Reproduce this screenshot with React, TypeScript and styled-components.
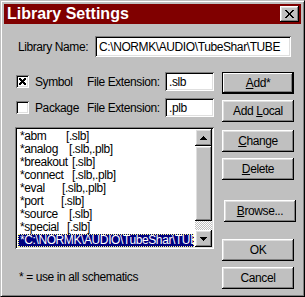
import React from 'react';
import styled, { createGlobalStyle, css } from 'styled-components';

const GlobalStyle = createGlobalStyle`
  html, body {
    margin: 0;
    padding: 0;
    background: #c0c0c0;
  }
  * {
    box-sizing: border-box;
  }
`;

const uiFont = css`
  font-family: 'Liberation Sans', Arial, sans-serif;
  font-size: 12px;
  letter-spacing: -0.4px;
  color: #000;
`;

const raised = css`
  background: #c0c0c0;
  box-shadow: inset -1px -1px #000, inset 1px 1px #fff, inset -2px -2px #808080, inset 2px 2px #dfdfdf;
`;

const sunken = css`
  box-shadow: inset 1px 1px #808080, inset -1px -1px #fff, inset 2px 2px #000, inset -2px -2px #dfdfdf;
`;

const Window = styled.div`
  width: 305px;
  height: 297px;
  background: #c0c0c0;
  border: 1px solid;
  border-color: #c0c0c0 #000 #000 #c0c0c0;
  box-shadow: inset 1px 1px #fff, inset -1px -1px #808080;
  padding: 3px;
  display: flex;
  flex-direction: column;
  ${uiFont};
`;

const TitleBar = styled.div`
  height: 20px;
  background: #800000;
  display: flex;
  align-items: center;
  justify-content: space-between;
  padding: 0 2px 0 3px;
`;

const Title = styled.span`
  font-family: 'Liberation Sans', Arial, sans-serif;
  font-weight: bold;
  font-size: 16px;
  letter-spacing: 0;
  color: #fff;
`;

const CloseButton = styled.div`
  width: 19px;
  height: 16px;
  ${raised};
  display: flex;
  align-items: center;
  justify-content: center;
`;

const Body = styled.div`
  display: flex;
  flex-direction: column;
  padding: 12px 10px 0 11px;
`;

const NameRow = styled.div`
  display: flex;
  align-items: center;
  height: 21px;
`;

const Label = styled.span`
  ${uiFont};
  white-space: nowrap;
  flex: none;
`;

const TextField = styled.div<{ $width: number; $height: number }>`
  width: ${(p) => p.$width}px;
  height: ${(p) => p.$height}px;
  background: #fff;
  ${sunken};
  display: flex;
  align-items: center;
  padding-left: 4px;
  margin-left: auto;
  white-space: nowrap;
  overflow: hidden;
  ${uiFont};
`;

const Main = styled.div`
  display: flex;
  gap: 8px;
  margin-top: 15px;
`;

const LeftCol = styled.div`
  width: 199px;
  display: flex;
  flex-direction: column;
`;

const OptionRow = styled.div<{ $top?: number }>`
  display: grid;
  grid-template-columns: 72px 1fr 49px;
  align-items: center;
  height: 19px;
  margin-top: ${(p) => p.$top ?? 0}px;
`;

const CheckLabel = styled.label`
  display: flex;
  align-items: center;
  gap: 6px;
  padding-left: 1px;
  ${uiFont};
`;

const CheckBox = styled.span`
  width: 13px;
  height: 13px;
  background: #fff;
  ${sunken};
  display: flex;
  align-items: center;
  justify-content: center;
`;

const ListBox = styled.div`
  margin-top: 10px;
  height: 122px;
  background: #fff;
  ${sunken};
  padding: 2px;
  display: flex;
`;

const Items = styled.div`
  flex: 1;
  padding-top: 1px;
  overflow: hidden;
`;

const Item = styled.div<{ $selected?: boolean }>`
  height: 13px;
  line-height: 13px;
  margin: 0 1px;
  padding-left: 2px;
  white-space: nowrap;
  overflow: hidden;
  display: flex;
  ${uiFont};
  ${(p) =>
    p.$selected &&
    css`
      background: #000080;
      color: #fff;
      outline: 1px dotted #ffff80;
      outline-offset: -1px;
    `}
`;

const ItemName = styled.span<{ $col: number }>`
  width: ${(p) => p.$col}px;
  flex: none;
`;

const ScrollBar = styled.div`
  width: 17px;
  display: flex;
  flex-direction: column;
`;

const ScrollButton = styled.div`
  width: 17px;
  height: 17px;
  ${raised};
  display: flex;
  align-items: center;
  justify-content: center;
`;

const Thumb = styled.div`
  height: 75px;
  ${raised};
`;

const Track = styled.div`
  flex: 1;
  background: repeating-conic-gradient(#c0c0c0 0 25%, #fff 0 50%) 0 0 / 2px 2px;
`;

const Footnote = styled.div`
  margin-top: 22px;
  padding-left: 4px;
  line-height: 13px;
  ${uiFont};
`;

const RightCol = styled.div`
  display: flex;
  flex-direction: column;
`;

const Button = styled.div<{ $gap?: number; $shift?: number; $default?: boolean }>`
  width: 72px;
  height: 22px;
  margin-top: ${(p) => p.$gap ?? 0}px;
  margin-left: ${(p) => p.$shift ?? 0}px;
  ${raised};
  display: flex;
  align-items: center;
  justify-content: center;
  ${uiFont};
  ${(p) =>
    p.$default &&
    css`
      border: 1px solid #000;
      box-shadow: inset -1px -1px #000, inset 1px 1px #fff, inset -2px -2px #808080;
    `}
`;

const CloseGlyph = () => (
  <svg width="9" height="8" viewBox="0 0 9 8" shapeRendering="crispEdges">
    <path d="M0 0h2v1h1v1h1v1h1V2h1V1h1V0h2v1H8v1H7v1H6v2h1v1h1v1h1v1H7V7H6V6H5V5H4v1H3v1H2v1H0V7h1V6h1V5h1V3H2V2H1V1H0z" fill="#000" />
  </svg>
);

const CheckGlyph = () => (
  <svg width="7" height="7" viewBox="0 0 7 7" shapeRendering="crispEdges">
    <path d="M0 0h2v1h1v1h1V1h1V0h2v2H6v1H5v1h1v1h1v2H5V6H4V5H3v1H2v1H0V5h1V4h1V3H1V2H0z" fill="#000" />
  </svg>
);

const Arrow = ({ up }: { up?: boolean }) => (
  <svg width="7" height="4" viewBox="0 0 7 4" shapeRendering="crispEdges">
    <path d={up ? 'M3 0h1v1h1v1h1v1h1v1H0V3h1V2h1V1h1z' : 'M0 0h7v1H6v1H5v1H4v1H3V3H2V2H1V1H0z'} fill="#000" />
  </svg>
);

const libraries = [
  { name: '*abm', ext: '[.slb]', col: 46 },
  { name: '*analog', ext: '[.slb,.plb]', col: 49 },
  { name: '*breakout', ext: '[.slb]', col: 52 },
  { name: '*connect', ext: '[.slb,.plb]', col: 52 },
  { name: '*eval', ext: '[.slb,.plb]', col: 42 },
  { name: '*port', ext: '[.slb]', col: 41 },
  { name: '*source', ext: '[.slb]', col: 49 },
  { name: '*special', ext: '[.slb]', col: 47 },
];

export default function App() {
  return (
    <>
      <GlobalStyle />
      <Window>
        <TitleBar>
          <Title>Library Settings</Title>
          <CloseButton>
            <CloseGlyph />
          </CloseButton>
        </TitleBar>
        <Body>
          <NameRow>
            <Label>&nbsp;Library Name:</Label>
            <TextField $width={196} $height={21}>
              C:\NORMK\AUDIO\TubeShar\TUBE
            </TextField>
          </NameRow>
          <Main>
            <LeftCol>
              <OptionRow>
                <CheckLabel>
                  <CheckBox>
                    <CheckGlyph />
                  </CheckBox>
                  Symbol
                </CheckLabel>
                <Label>File Extension:</Label>
                <TextField $width={49} $height={19}>
                  .slb
                </TextField>
              </OptionRow>
              <OptionRow $top={7}>
                <CheckLabel>
                  <CheckBox />
                  Package
                </CheckLabel>
                <Label>File Extension:</Label>
                <TextField $width={49} $height={19}>
                  .plb
                </TextField>
              </OptionRow>
              <ListBox>
                <Items>
                  {libraries.map((lib) => (
                    <Item key={lib.name}>
                      <ItemName $col={lib.col}>{lib.name}</ItemName>
                      <span>{lib.ext}</span>
                    </Item>
                  ))}
                  <Item $selected>*C:\NORMK\AUDIO\TubeShar\TUBE</Item>
                </Items>
                <ScrollBar>
                  <ScrollButton>
                    <Arrow up />
                  </ScrollButton>
                  <Thumb />
                  <Track />
                  <ScrollButton>
                    <Arrow />
                  </ScrollButton>
                </ScrollBar>
              </ListBox>
              <Footnote>* = use in all schematics</Footnote>
            </LeftCol>
            <RightCol>
              <Button $default>
                <u>A</u>dd*
              </Button>
              <Button $gap={6}>
                Add&nbsp;<u>L</u>ocal
              </Button>
              <Button $gap={8}>
                <u>C</u>hange
              </Button>
              <Button $gap={6}>
                <u>D</u>elete
              </Button>
              <Button $gap={20} $shift={2}>
                <u>B</u>rowse...
              </Button>
              <Button $gap={17}>OK</Button>
              <Button $gap={6}>Cancel</Button>
            </RightCol>
          </Main>
        </Body>
      </Window>
    </>
  );
}
